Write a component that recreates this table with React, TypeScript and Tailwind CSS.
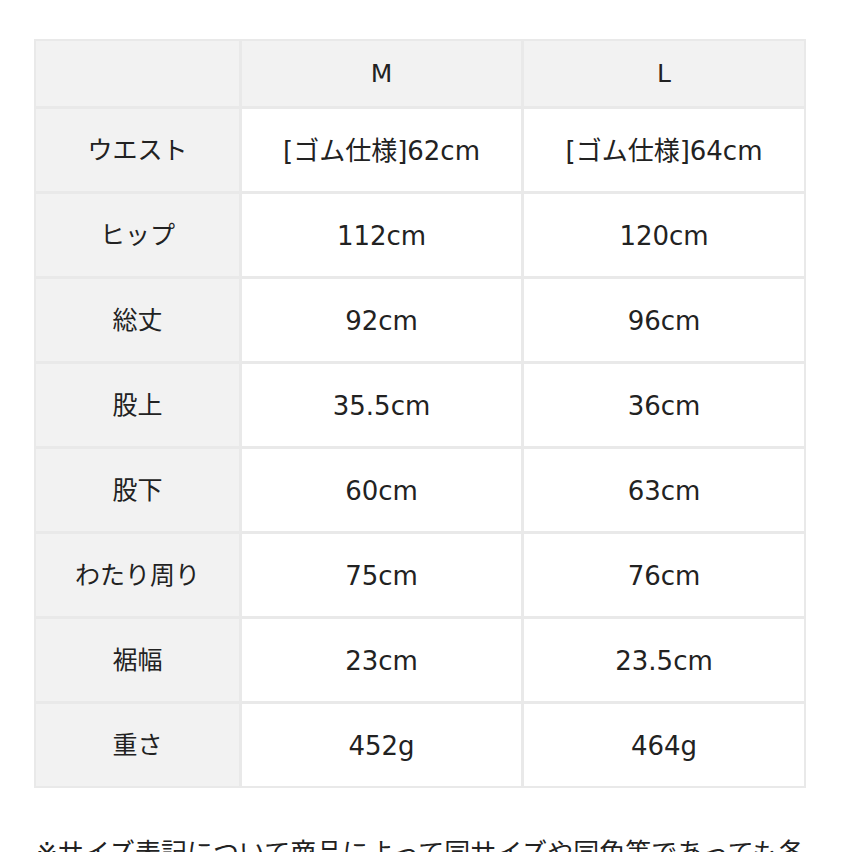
import React from 'react';

interface SizeRow {
  label: string;
  m: string;
  l: string;
}

const rows: SizeRow[] = [
  { label: 'ウエスト', m: '[ゴム仕様]62cm', l: '[ゴム仕様]64cm' },
  { label: 'ヒップ', m: '112cm', l: '120cm' },
  { label: '総丈', m: '92cm', l: '96cm' },
  { label: '股上', m: '35.5cm', l: '36cm' },
  { label: '股下', m: '60cm', l: '63cm' },
  { label: 'わたり周り', m: '75cm', l: '76cm' },
  { label: '裾幅', m: '23cm', l: '23.5cm' },
  { label: '重さ', m: '452g', l: '464g' },
];

const font = "font-['DejaVu_Sans','Noto_Sans_CJK_JP',sans-serif]";

const App: React.FC = () => {
  return (
    <div className={`h-[852px] w-[852px] overflow-hidden bg-white pt-[39px] pl-[34px] text-[#222] ${font}`}>
      {/* size table */}
      <div className="grid w-[772px] grid-cols-[203px_279px_280px] gap-[3px] bg-[#e9e9e9] p-[2px]">
        <div className="h-[65px] bg-[#f2f2f2]" />
        <div className="flex h-[65px] items-center justify-center bg-[#f2f2f2] text-[25px]">M</div>
        <div className="flex h-[65px] items-center justify-center bg-[#f2f2f2] text-[25px]">L</div>

        {rows.map((row) => (
          <React.Fragment key={row.label}>
            <div className="flex h-[82px] items-center justify-center bg-[#f2f2f2] pt-[2px] text-[25px]">
              {row.label}
            </div>
            <div className="flex h-[82px] items-center justify-center bg-white pt-[2px] text-[26px]">{row.m}</div>
            <div className="flex h-[82px] items-center justify-center bg-white pt-[2px] text-[26px]">{row.l}</div>
          </React.Fragment>
        ))}
      </div>

      <p className="mt-[47px] ml-[2px] w-[790px] text-[26px] leading-[36px]">
        ※サイズ表記について商品によって同サイズや同色等であっても各商品で個体差がございます。
      </p>
    </div>
  );
};

export default App;
